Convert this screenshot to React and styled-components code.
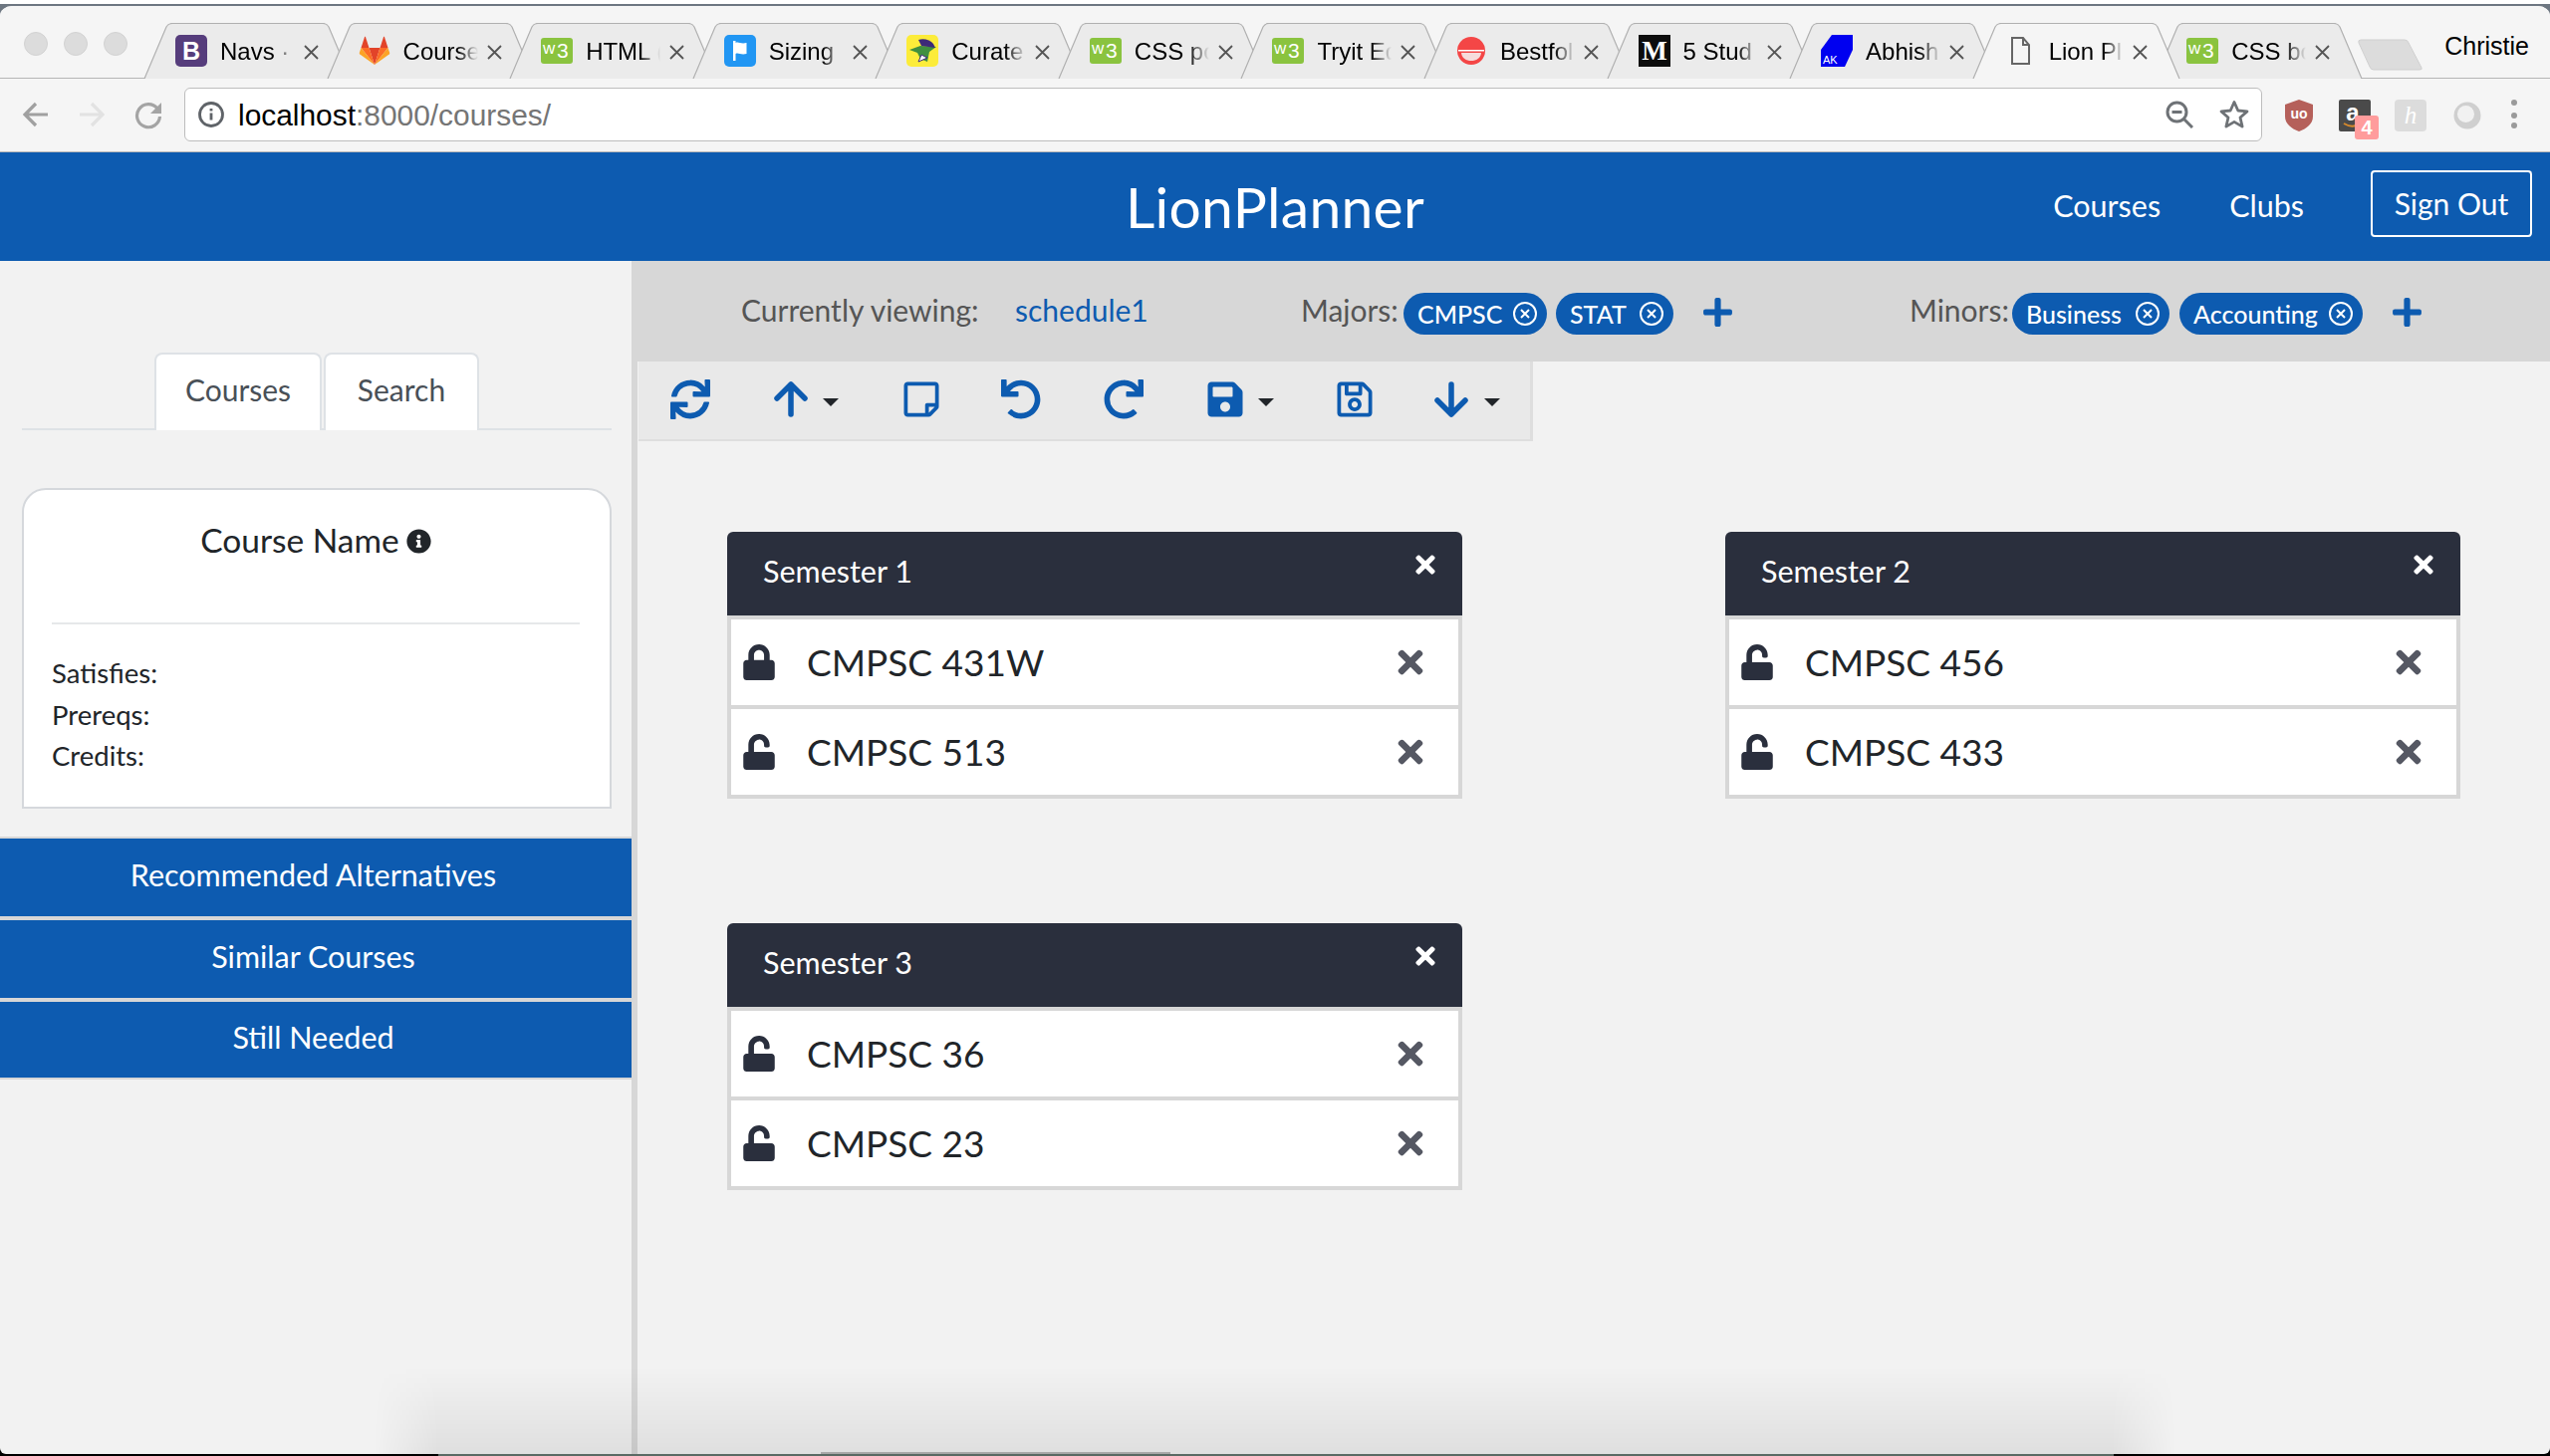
import React from "react";
import styled, { createGlobalStyle } from "styled-components";
import {
  FaSync, FaRegStickyNote, FaUndo, FaRedo, FaSave, FaRegSave,
  FaLock, FaUnlock, FaTimes, FaPlus, FaInfoCircle,
} from "react-icons/fa";

const BLUE = "#0d5bb0";
const GREY = "#d7d7d7";
const UI = `"Lato", "Open Sans", sans-serif`;
const CHROME = `"Liberation Sans", Arial, sans-serif`;

const Global = createGlobalStyle`
  html, body { margin: 0; padding: 0; width: 2560px; height: 1462px; overflow: hidden; }
  body { background: linear-gradient(#fff 0 4px, #6d7681 4px 20px, #000 20px); font-family: ${UI}; }
  * { box-sizing: border-box; }
`;

const Win = styled.div`
  position: relative; margin-top: 4px; width: 2560px; height: 1456px;
  border-top: 2px solid #6d7681; border-radius: 12px 12px 6px 6px;
  background: #f2f2f2; overflow: hidden; display: flex; flex-direction: column;
`;

/* ---------- browser chrome ---------- */
const TabStrip = styled.div`
  height: 73px; flex: none; background: #f5f5f5; border-bottom: 1px solid #b5b5b5;
  display: flex; align-items: flex-start; position: relative;
`;
const Lights = styled.div`
  width: 144px; flex: none; display: flex; gap: 16px; padding: 26px 0 0 24px;
`;
const Light = styled.span`
  width: 24px; height: 24px; border-radius: 50%; background: #dcdcdc; border: 1px solid #d2d2d2;
`;
const TabList = styled.div`display: flex; padding-top: 17px; height: 73px;`;
const Tab = styled.div`
  position: relative; width: 209px; height: 56px; flex: none;
  margin-right: -25.45px; z-index: ${(p) => (p.$active ? 2 : 1)};
  display: flex; align-items: flex-start; padding: 13px 0 0 32px;
  font: 24px/32px ${CHROME}; color: #000;
`;
const TabShape = styled.svg`position: absolute; inset: 0; width: 209px; height: 56px; z-index: -1;`;
const TabTitle = styled.span`
  width: 75px; margin-left: 13px; white-space: pre; overflow: hidden;
  -webkit-mask-image: linear-gradient(90deg, #000 72%, transparent 100%);
  mask-image: linear-gradient(90deg, #000 72%, transparent 100%);
`;
const TabClose = styled.svg`width: 15px; height: 15px; margin: 9px 0 0 9px; flex: none;`;
const NewTab = styled.svg`width: 66px; height: 32px; flex: none; margin: 16px 0 0 20px;`;
const Profile = styled.span`
  position: absolute; right: 21px; top: 26px; font: 25px/28px ${CHROME}; color: #000;
`;

const NavBar = styled.div`
  height: 74px; flex: none; background: #f5f5f5; border-bottom: 1px solid #b8b8b8;
  display: flex; align-items: flex-start; padding: 9px 0 0 23px;
`;
const NavIcons = styled.div`width: 162px; flex: none; display: flex; gap: 30px; padding-top: 14px;`;
const UrlBox = styled.div`
  width: 2086px; height: 54px; flex: none; background: #fff; border: 1px solid #bdbdbd; border-radius: 6px;
  display: flex; align-items: center; padding: 0 12px 0 13px;
`;
const Url = styled.span`
  margin: 2px 0 0 14px; font: 29.9px ${CHROME}; color: #000; flex: 1;
  & > em { font-style: normal; color: #757575; }
`;
const ExtRow = styled.div`position: relative; flex: 1;`;
const Ext = styled.div`
  position: absolute; left: ${(p) => p.$x}px; top: ${(p) => p.$y}px;
  width: ${(p) => p.$s || 32}px; height: ${(p) => p.$s || 32}px;
`;
const Badge = styled.span`
  position: absolute; left: 16px; top: 16px; width: 24px; height: 24px; border-radius: 3px;
  background: #ff9c9c; color: #fff; font: bold 20px/24px ${CHROME}; text-align: center;
`;

/* ---------- page ---------- */
const Header = styled.header`
  height: 109px; flex: none; background: ${BLUE}; color: #fff;
  display: grid; grid-template-columns: 1fr auto 1fr; align-items: center;
`;
const Brand = styled.div`font-size: 57px; line-height: 1; letter-spacing: .3px;`;
const HeaderNav = styled.nav`
  display: flex; justify-content: flex-end; align-items: center; padding-right: 18px; font-size: 30.500px;
`;
const HeaderLink = styled.a`margin: 0 ${(p) => p.$mr}px 3px 0; color: #fff;`;
const SignOut = styled.button`
  width: 162px; height: 67px; margin-bottom: 6px; padding-bottom: 3px; background: transparent; color: #fff;
  border: 2px solid #fff; border-radius: 4px; font: 30px ${UI};
`;

const Body = styled.div`flex: 1; display: flex; min-height: 0;`;
const Sidebar = styled.aside`
  width: 640px; flex: none; border-right: 6px solid ${GREY}; padding-top: 92px;
`;
const TabsBar = styled.div`
  margin: 0 20px 0 22px; height: 78px; border-bottom: 2px solid #dee2e6;
  display: flex; justify-content: center; gap: 2px;
`;
const SideTab = styled.div`
  width: ${(p) => p.$w}px; height: 78px; background: #fff; color: #495057;
  border: 2px solid #dee2e6; border-bottom: 0; border-radius: 8px 8px 0 0;
  display: flex; align-items: center; justify-content: center; padding-bottom: 6px; font-size: 30px;
`;
const InfoCard = styled.section`
  margin: 58px 20px 0 22px; height: 322px; background: #fff; border: 2px solid #d5d8dc;
  border-radius: 24px 24px 0 0; padding: 0 30px 0 28px; color: #212529;
`;
const CardTitle = styled.h2`
  margin: 0; height: 135px; padding-top: 29px; border-bottom: 2px solid #e6e8ea;
  display: flex; justify-content: center; align-items: flex-start; gap: 7px;
  font: 400 33.5px/42px ${UI};
  & svg { margin-top: 10px; }
`;
const Facts = styled.div`padding-top: 28px; font-size: 27.500px; line-height: 41.5px;`;
const ActionStack = styled.div`
  margin-top: 28px; background: ${GREY}; padding: 2px 0; display: flex; flex-direction: column; gap: 4px;
`;
const Action = styled.div`
  height: ${(p) => p.$h}px; background: ${BLUE}; color: #fff; font-size: 30.5px;
  display: flex; align-items: center; justify-content: center; padding: 0 5px 6px 0;
`;

const Main = styled.main`flex: 1; min-width: 0; display: flex; flex-direction: column;`;
const SubBar = styled.div`
  height: 101px; flex: none; background: ${GREY}; padding: 0 0 0 104px;
  display: flex; align-items: center; font-size: 30px; color: #555;
`;
const Field = styled.span`
  width: ${(p) => p.$w}px; flex: none; margin: 0 0 4px ${(p) => p.$ml || 0}px; white-space: nowrap;
  color: ${(p) => (p.$link ? BLUE : "#555")};
`;
const Pill = styled.span`
  width: ${(p) => p.$w}px; height: 42px; flex: none; margin: 4px 0 0 ${(p) => p.$ml || 0}px; border-radius: 21px;
  background: ${BLUE}; color: #fff; font-size: 25px; font-weight: 500;
  display: flex; align-items: center; justify-content: space-between; padding: 0 9px 0 14px;
  & > svg { flex: none; }
`;
const AddBtn = styled.span`
  flex: none; display: flex; color: ${BLUE}; margin: 2px 0 0 ${(p) => p.$ml}px; width: 33px; justify-content: center;
`;

const Toolbar = styled.div`
  width: 898px; height: 80px; flex: none; margin-left: 1px; background: #e9e9e9;
  border-right: 3px solid #dedede; border-bottom: 2px solid #dedede;
  display: flex; align-items: center; padding: 0 0 2px 32px; color: ${BLUE};
`;
const ToolItem = styled.span`
  width: ${(p) => p.$w}px; flex: none; display: flex; align-items: center;
`;
const Caret = styled.i`
  width: 0; height: 0; margin: 6px 0 0 ${(p) => p.$ml}px;
  border-left: 8px solid transparent; border-right: 8px solid transparent; border-top: 8px solid #212529;
`;

const Board = styled.div`
  padding: 91px 0 0 90px; display: grid; grid-template-columns: 738px 738px;
  column-gap: 264px; row-gap: 125px; align-content: start;
`;
const Semester = styled.section`width: 738px;`;
const SemHead = styled.div`
  height: 84px; background: #2a2f3d; color: #fff; border-radius: 6px 6px 0 0;
  display: flex; align-items: center; justify-content: space-between; padding: 0 23px 0 36px;
  font-size: 30.500px;
  & > span { padding-bottom: 6px; }
  & > svg { margin-bottom: 18px; }
`;
const Rows = styled.div`
  background: ${GREY}; padding: 4px; display: flex; flex-direction: column; gap: 4px;
`;
const Row = styled.div`
  height: 86px; background: #fff; display: flex; align-items: center;
  padding: 0 30px 0 10px; color: #212529; font-size: 37px;
  & > svg:first-child { color: #2a2f3d; flex: none; }
  & > svg:last-child { color: #555863; flex: none; }
`;
const RowName = styled.span`flex: 1; margin-left: 30px; margin-bottom: 1px;`;

const DockShade = styled.div`
  position: absolute; left: 375px; bottom: 0; width: 1810px; height: 87px; pointer-events: none;
  background: linear-gradient(rgba(0,0,0,0), rgba(0,0,0,.075));
  -webkit-mask-image: linear-gradient(90deg, transparent, #000 65px, #000 1745px, transparent);
  mask-image: linear-gradient(90deg, transparent, #000 65px, #000 1745px, transparent);
`;
const DockEdge = styled.div`
  position: fixed; left: 440px; bottom: 0; width: 1682px; height: 2px; background: #5a6a64;
  &::before { content: ""; position: absolute; left: 384px; top: -2px; width: 351px; height: 2px; background: #a8a8a8; }
`;

/* ---------- drawings ---------- */
const Rect = ({ fill }) => <rect width="32" height="32" rx="5" fill={fill} />;
const Fav = styled.svg`width: 32px; height: 32px; flex: none; margin-top: -1px;`;

const favs = {
  b: (
    <>
      <Rect fill="#563d7c" />
      <text x="16" y="25" textAnchor="middle" fontFamily={CHROME} fontWeight="700" fontSize="25" fill="#fff">B</text>
    </>
  ),
  gitlab: (
    <>
      <path d="M16 30 10.5 13h11z" fill="#e24329" />
      <path d="M16 30 10.5 13h-8z" fill="#fc6d26" />
      <path d="M2.5 13 .8 18c-.2.6 0 1.2.5 1.6L16 30z" fill="#fca326" />
      <path d="M2.5 13h8L7 2.2c-.2-.5-.8-.5-1 0z" fill="#e24329" />
      <path d="M16 30 21.5 13h8z" fill="#fc6d26" />
      <path d="M29.5 13 31.2 18c.2.6 0 1.2-.5 1.6L16 30z" fill="#fca326" />
      <path d="M29.5 13h-8L25 2.2c.2-.5.8-.5 1 0z" fill="#e24329" />
    </>
  ),
  w3: (
    <>
      <rect y="3" width="32" height="26" rx="3" fill="#8ac33f" />
      <text x="2" y="19" fontFamily={CHROME} fontSize="17" fill="#fff">w</text>
      <text x="16" y="23" fontFamily={CHROME} fontSize="21" fill="#fff">3</text>
    </>
  ),
  flag: (
    <>
      <Rect fill="#2196f3" />
      <path d="M9 6h2.5v20H9zM11.5 8c3-1.500 5 1.500 11 0v11c-6 1.500-8-1.500-11 0z" fill="#fff" />
    </>
  ),
  curate: (
    <>
      <Rect fill="#fcec3a" />
      <path d="M3 15 14 11l16 1-7 5-2 10-7-3-3-6z" fill="#3f8f3f" />
      <path d="M12 5c5-2 12 0 15 4l2 4-14-2z" fill="#3d2a78" />
      <path d="M12 27 15 20l6 3z" fill="#fff" stroke="#3d2a78" />
    </>
  ),
  best: (
    <>
      <circle cx="16" cy="16" r="14" fill="#f44646" />
      <path d="M3 15h26v1.500H3z" fill="#fff" />
      <path d="M6 18h20c-.5 5.500-5 8-10 8s-9.500-2.500-10-8z" fill="#f6dcdc" />
    </>
  ),
  m: (
    <>
      <rect width="32" height="32" fill="#0d0d0d" />
      <text x="16" y="25" textAnchor="middle" fontFamily={`"Liberation Serif", serif`} fontWeight="700" fontSize="27" fill="#fff">M</text>
    </>
  ),
  ak: (
    <>
      <path d="M0 32V15L11 0h21v15l-8 17z" fill="#0000f0" />
      <text x="2" y="29" fontFamily={CHROME} fontSize="11" fill="#fff">AK</text>
    </>
  ),
  doc: (
    <path d="M8 3h11l6 7v19H8zM19 3v7h6" fill="none" stroke="#666" strokeWidth="2" />
  ),
};

const TabPath = ({ active }) => (
  <TabShape viewBox="0 0 209 56" preserveAspectRatio="none">
    <path
      d="M1 56 L23 4 Q25 .5 29 .5 L180 .5 Q184 .5 186 4 L208 56"
      fill={active ? "#f5f5f5" : "#ebebeb"}
      stroke="#b0b0b0"
      strokeWidth="1.200"
    />
  </TabShape>
);

const tabs = [
  ["b", "Navs ·"], ["gitlab", "Course"], ["w3", "HTML ("], ["flag", "Sizing"], ["curate", "Curate"],
  ["w3", "CSS po"], ["w3", "Tryit Ed"], ["best", "Bestfol"], ["m", "5 Stud"], ["ak", "Abhish"],
  ["doc", "Lion Pl"], ["w3", "CSS bo"],
];

const CloseGlyph = () => (
  <TabClose viewBox="0 0 15 15">
    <path d="M1 1l13 13M14 1 1 14" stroke="#555" strokeWidth="1.800" />
  </TabClose>
);

const Arrow = ({ down }) => (
  <svg width="34" height="36" viewBox="0 0 34 36" fill="none" stroke="currentColor" strokeWidth="5.500" strokeLinecap="round" strokeLinejoin="round"
    style={down ? { transform: "scaleY(-1)" } : undefined}>
    <path d="M17 33V3M3 17 17 3l14 14" />
  </svg>
);

const PillX = () => (
  <svg width="26" height="26" viewBox="0 0 26 26" fill="none" stroke="#fff" strokeWidth="2">
    <circle cx="13" cy="13" r="11" />
    <path d="M9 9l8 8M17 9l-8 8" />
  </svg>
);

const Facet = ({ w, ml, children }) => (
  <Pill $w={w} $ml={ml}><span>{children}</span><PillX /></Pill>
);

const semesters = [
  { name: "Semester 1", rows: [["CMPSC 431W", true], ["CMPSC 513", false]] },
  { name: "Semester 2", rows: [["CMPSC 456", false], ["CMPSC 433", false]] },
  { name: "Semester 3", rows: [["CMPSC 36", false], ["CMPSC 23", false]] },
];

export default function App() {
  return (
    <>
      <Global />
      <Win>
        <TabStrip>
          <Lights><Light /><Light /><Light /></Lights>
          <TabList>
            {tabs.map(([icon, title], i) => (
              <Tab key={i} $active={icon === "doc"}>
                <TabPath active={icon === "doc"} />
                <Fav viewBox="0 0 32 32">{favs[icon]}</Fav>
                <TabTitle>{title}</TabTitle>
                <CloseGlyph />
              </Tab>
            ))}
            <NewTab viewBox="0 0 66 32">
              <path d="M3 1h44q3 0 4 3l13 25q1 2-2 2H16q-3 0-4-3L1 4q-1-3 2-3z" fill="#dcdcdc" stroke="#cfcfcf" />
            </NewTab>
          </TabList>
          <Profile>Christie</Profile>
        </TabStrip>

        <NavBar>
          <NavIcons>
            <svg width="26" height="26" viewBox="0 0 26 26" fill="none" stroke="#a0a0a0" strokeWidth="3.200"><path d="M25 13H3M13 2 2 13l11 11" /></svg>
            <svg width="26" height="26" viewBox="0 0 26 26" fill="none" stroke="#e2e2e2" strokeWidth="3.200"><path d="M1 13h22M13 2l11 11-11 11" /></svg>
            <svg width="28" height="28" viewBox="0 0 28 28" fill="none"><path d="M23 7A11.500 11.500 0 1 0 25.500 15" stroke="#a4a4a4" strokeWidth="3.200" /><path d="M27 1v11H16z" fill="#a4a4a4" /></svg>
          </NavIcons>
          <UrlBox>
            <svg width="26" height="26" viewBox="0 0 26 26" fill="none" stroke="#5f6368" strokeWidth="2.800">
              <circle cx="13" cy="13" r="11.500" /><path d="M13 11.500v7M13 7v2.500" />
            </svg>
            <Url>localhost<em>:8000/courses/</em></Url>
            <svg width="28" height="28" viewBox="0 0 28 28" fill="none" stroke="#6e7276" strokeWidth="3" style={{ marginRight: 26 }}>
              <circle cx="11.500" cy="11.500" r="9.500" /><path d="M18 18l9 9M6.500 11.500h10" />
            </svg>
            <svg width="30" height="30" viewBox="0 0 30 30" fill="none" stroke="#6e7276" strokeWidth="2.800" strokeLinejoin="round">
              <path d="M15 2.500 18.800 11l9.200.9-7 6.100 2.100 9.100L15 22.400l-8.100 4.700L9 18l-7-6.100L11.200 11z" />
            </svg>
          </UrlBox>
          <ExtRow>
            <Ext $x={22} $y={12}>
              <svg width="30" height="32" viewBox="0 0 30 32">
                <path d="M15 0 29 5v12c0 7-6 12-14 15C7 29 1 24 1 17V5z" fill="#b5605a" />
                <text x="15" y="19" textAnchor="middle" fontFamily={CHROME} fontWeight="700" fontSize="14" fill="#fff">uo</text>
              </svg>
            </Ext>
            <Ext $x={77} $y={12}>
              <svg width="32" height="32" viewBox="0 0 32 32">
                <rect width="32" height="32" rx="2" fill="#4a4a4a" />
                <text x="14" y="21" textAnchor="middle" fontFamily={CHROME} fontWeight="700" fontSize="24" fill="#fff">a</text>
                <path d="M5 24q7 4 12 2" stroke="#d98a2b" strokeWidth="2" fill="none" />
              </svg>
              <Badge>4</Badge>
            </Ext>
            <Ext $x={133} $y={12}>
              <svg width="32" height="32" viewBox="0 0 32 32">
                <rect width="32" height="32" rx="4" fill="#dcdcdc" />
                <text x="16" y="24" textAnchor="middle" fontFamily={`"Liberation Serif", serif`} fontStyle="italic" fontSize="25" fill="#fff">h</text>
              </svg>
            </Ext>
            <Ext $x={192} $y={14} $s={28}>
              <svg width="28" height="28" viewBox="0 0 28 28">
                <circle cx="14" cy="14" r="13.500" fill="#cfcfcf" />
                <circle cx="12.500" cy="12.500" r="8.500" fill="#f1f1f1" />
              </svg>
            </Ext>
            <Ext $x={247} $y={12} $s={12}>
              <svg width="12" height="30" viewBox="0 0 12 30" fill="#9a9a9a">
                <circle cx="6" cy="3" r="3" /><circle cx="6" cy="16" r="3" /><circle cx="6" cy="26" r="3" />
              </svg>
            </Ext>
          </ExtRow>
        </NavBar>

        <Header>
          <span />
          <Brand>LionPlanner</Brand>
          <HeaderNav>
            <HeaderLink $mr={69}>Courses</HeaderLink>
            <HeaderLink $mr={67}>Clubs</HeaderLink>
            <SignOut>Sign Out</SignOut>
          </HeaderNav>
        </Header>

        <Body>
          <Sidebar>
            <TabsBar>
              <SideTab $w={168}>Courses</SideTab>
              <SideTab $w={156}>Search</SideTab>
            </TabsBar>
            <InfoCard>
              <CardTitle>Course Name <FaInfoCircle size={25} /></CardTitle>
              <Facts>
                <div>Satisfies:</div>
                <div>Prereqs:</div>
                <div>Credits:</div>
              </Facts>
            </InfoCard>
            <ActionStack>
              <Action $h={78}>Recommended Alternatives</Action>
              <Action $h={78}>Similar Courses</Action>
              <Action $h={76}>Still Needed</Action>
            </ActionStack>
          </Sidebar>

          <Main>
            <SubBar>
              <Field $w={275}>Currently viewing:</Field>
              <Field $w={287} $link>schedule1</Field>
              <Field $w={103}>Majors:</Field>
              <Facet w={144}>CMPSC</Facet>
              <Facet w={118} ml={9}>STAT</Facet>
              <AddBtn $ml={28}><FaPlus size={33} /></AddBtn>
              <Field $w={103} $ml={176}>Minors:</Field>
              <Facet w={158}>Business</Facet>
              <Facet w={184} ml={10}>Accounting</Facet>
              <AddBtn $ml={28}><FaPlus size={33} /></AddBtn>
            </SubBar>
            <Toolbar>
              <ToolItem $w={104}><FaSync size={40} /></ToolItem>
              <ToolItem $w={128}><Arrow /><Caret $ml={15} /></ToolItem>
              <ToolItem $w={100}><FaRegStickyNote size={40} /></ToolItem>
              <ToolItem $w={103}><FaUndo size={40} /></ToolItem>
              <ToolItem $w={102}><FaRedo size={40} /></ToolItem>
              <ToolItem $w={130}><FaSave size={40} /><Caret $ml={13} /></ToolItem>
              <ToolItem $w={100}><FaRegSave size={40} /></ToolItem>
              <ToolItem $w={70}><Arrow down /><Caret $ml={16} /></ToolItem>
            </Toolbar>
            <Board>
              {semesters.map((s) => (
                <Semester key={s.name}>
                  <SemHead><span>{s.name}</span><FaTimes size={28} /></SemHead>
                  <Rows>
                    {s.rows.map(([name, locked]) => (
                      <Row key={name}>
                        {locked ? <FaLock size={36} /> : <FaUnlock size={36} />}
                        <RowName>{name}</RowName>
                        <FaTimes size={36} />
                      </Row>
                    ))}
                  </Rows>
                </Semester>
              ))}
            </Board>
          </Main>
        </Body>
        <DockShade />
      </Win>
      <DockEdge />
    </>
  );
}
